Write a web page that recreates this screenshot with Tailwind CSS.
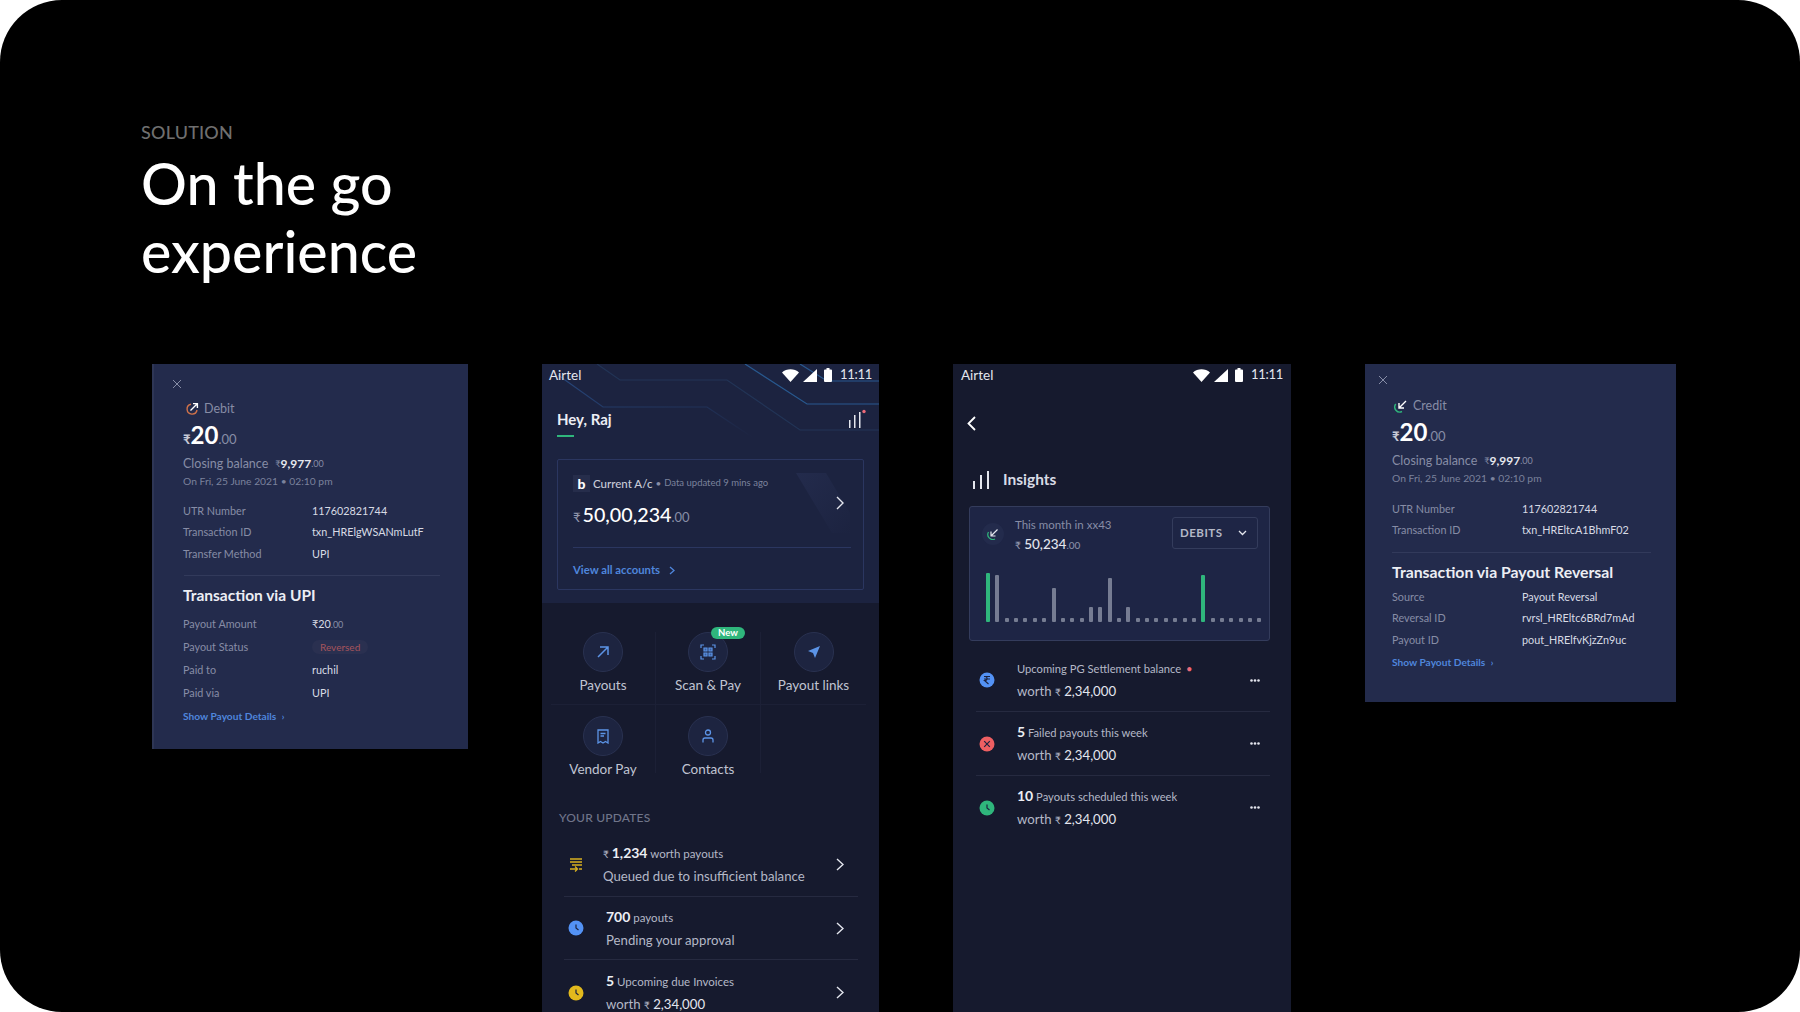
<!DOCTYPE html>
<html lang="en">
<head>
  <meta charset="UTF-8" />
  <title>On the go experience</title>
  <script src="https://cdn.jsdelivr.net/npm/@tailwindcss/browser@4"></script>
</head>
<body class="bg-white font-['Lato','Noto_Sans',sans-serif]">
<div class="w-[1800px] h-[1012px] bg-black rounded-[62px] overflow-hidden">

  <!-- Heading -->
  <div class="h-[364px] pl-[141px] pt-[121px]">
    <p class="text-[18px] leading-[22px] font-medium text-[#6f6f6f] tracking-[0.2px]">SOLUTION</p>
    <h1 class="mt-[6px] text-[57.3px] leading-[68px] font-medium text-white">On the go<br>experience</h1>
  </div>

  <div class="flex items-start gap-[74px] pl-[152px]">

    <!-- Debit card -->
    <div class="w-[316px] h-[385px] bg-[#232b4c] border-l-2 border-[#2e3655] pl-[30px] pt-[15px] text-[10.8px] text-[#878da6]">
      <svg class="w-[10px] h-[10px] ml-[-12px]" viewBox="0 0 10 10" fill="none" stroke="#878da6" stroke-width="1"><path d="M1 1l8 8M9 1l-8 8"/></svg>
      <div class="flex items-center h-[20px] mt-[10px] ml-[1px] gap-[5px] text-[12.5px]">
        <svg class="w-[14px] h-[14px]" viewBox="0 0 14 14" fill="none" stroke-width="1.4"><path d="M6 2.2A5 5 0 1 0 12 8" stroke="#d0724a"/><path d="M5.5 8.5L12 2M8 1.6h4.4V6" stroke="#fff"/></svg>
        <span>Debit</span>
      </div>
      <div class="flex items-baseline h-[28px] mt-[2px] ml-[-1px] text-white">
        <span class="text-[13px] font-bold text-[#c8cbd8]">₹</span><span class="text-[24px] font-bold leading-[28px]">20</span><span class="text-[13px] text-[#878da6]">.00</span>
      </div>
      <div class="flex items-center h-[20px] mt-[5px] ml-[-1px] text-[12.5px]">
        <span>Closing balance</span><span class="ml-[7px] text-[9px]">₹</span><span class="font-bold text-[#e6e8ef] text-[12px]">9,977</span><span class="text-[9px]">.00</span>
      </div>
      <p class="h-[16px] leading-[16px] mt-[-1px] ml-[-1px] text-[10.3px] text-[#7b829c]">On Fri, 25 June 2021 • 02:10 pm</p>
      <div class="mt-[11px] ml-[-1px]">
        <div class="flex items-center h-[21.5px]"><span class="w-[129px]">UTR Number</span><span class="text-[#d8dbe5]">117602821744</span></div>
        <div class="flex items-center h-[21.5px]"><span class="w-[129px]">Transaction ID</span><span class="text-[#d8dbe5]">txn_HRElgWSANmLutF</span></div>
        <div class="flex items-center h-[21.5px]"><span class="w-[129px]">Transfer Method</span><span class="text-[#d8dbe5]">UPI</span></div>
      </div>
      <div class="w-[256px] h-px bg-[#323a5b] mt-[10px]"></div>
      <p class="mt-[8px] ml-[-1px] text-[15.5px] leading-[22px] font-bold text-[#eceef4]">Transaction via UPI</p>
      <div class="mt-[7px] ml-[-1px]">
        <div class="flex items-center h-[23px]"><span class="w-[129px]">Payout Amount</span><span class="text-[#d8dbe5]">₹20<span class="text-[9px] text-[#878da6]">.00</span></span></div>
        <div class="flex items-center h-[23px]"><span class="w-[129px]">Payout Status</span><span class="px-[8px] h-[14px] leading-[14px] rounded-full bg-[#2a3050] text-[10px] text-[#a6545c]">Reversed</span></div>
        <div class="flex items-center h-[23px]"><span class="w-[129px]">Paid to</span><span class="text-[#d8dbe5]">ruchil</span></div>
        <div class="flex items-center h-[23px]"><span class="w-[129px]">Paid via</span><span class="text-[#d8dbe5]">UPI</span></div>
      </div>
      <p class="h-[23px] ml-[-1px] leading-[23px] text-[10.2px] font-bold text-[#4f86dc]">Show Payout Details <span class="ml-[3px] text-[9px]">›</span></p>
    </div>

    <!-- Home screen -->
    <div class="w-[337px] h-[648px] bg-[#161a2e] overflow-hidden">
      <div class="relative h-[239px] bg-[#1c2340] px-[15px]">
        <svg class="absolute inset-0 w-[337px] h-[120px]" viewBox="0 0 337 120" fill="none" stroke-width="1.2">
          <defs>
            <linearGradient id="fadeA" x1="0" y1="0" x2="1" y2="1"><stop offset="0" stop-color="#27487e"/><stop offset="1" stop-color="#1c2340"/></linearGradient>
            <linearGradient id="fadeB" x1="0" y1="0" x2="1" y2="1"><stop offset="0" stop-color="#232b4c"/><stop offset="1" stop-color="#1c2340"/></linearGradient>
          </defs>
          <path d="M55 0L78 16H185L258 66H337" stroke="#223456"/>
          <path d="M16 11L61 43H165L210 73" stroke="url(#fadeA)"/>
          <path d="M203 0L265 40H337" stroke="#28598f"/>
          <path d="M258 0L285 17H337" stroke="#28598f"/>
        </svg>
        <div class="relative flex items-center h-[22px] mx-[-8px] text-[13.5px] text-[#e4e6ee]">
          <span>Airtel</span>
          <div class="flex items-center ml-auto">
            <svg class="w-[17px] h-[13px]" viewBox="0 0 17 13" fill="#fff"><path d="M0 3.5C4.5-.8 12.5-.8 17 3.5L8.5 13z"/></svg>
            <svg class="w-[14px] h-[13px] ml-[4px]" viewBox="0 0 14 13" fill="#fff"><path d="M14 0v13H0z"/></svg>
            <svg class="w-[8px] h-[14px] ml-[7px]" viewBox="0 0 8 14" fill="#fff"><path d="M2.5 0h3v1.5H7a1 1 0 0 1 1 1V13a1 1 0 0 1-1 1H1a1 1 0 0 1-1-1V2.500a1 1 0 0 1 1-1h1.500z"/></svg>
            <span class="ml-[8px] w-[32px] text-[13px] tracking-[-0.3px] text-right">11:11</span>
          </div>
        </div>
        <div class="relative flex items-center h-[24px] mt-[21px]">
          <span class="text-[15px] font-bold text-[#eceef4]">Hey, Raj</span>
          <svg class="ml-auto mr-[-2px] w-[18px] h-[20px]" viewBox="0 0 18 20" fill="#e4e6ee"><path d="M1 11h1.500v8H1zM6 6h1.500v13H6zM11 3h1.500v16H11z"/><circle cx="16" cy="2.500" r="1.700" fill="#ec6a78"/></svg>
        </div>
        <div class="w-[17px] h-[2px] bg-[#2fb67c] mt-[4px]"></div>
        <div class="relative mt-[22px] h-[131px] border border-[#2b3660] rounded-[2px] px-[15px]">
          <svg class="absolute left-[238px] top-[13px]" width="54" height="60" viewBox="0 0 54 60"><path d="M0 0H30L54 40V60H36z" fill="url(#fadeB)"/></svg>
          <div class="relative flex items-center h-[17px] mt-[15px]">
            <span class="w-[17px] h-[17px] bg-[#262d4b] text-center text-[14px] leading-[17px] font-black text-white">b</span>
            <span class="ml-[3px] text-[11.5px] font-medium text-[#c8cbd8]">Current A/c</span>
            <span class="ml-[3px] text-[#878da6] text-[10px]">•</span>
            <span class="ml-[3px] text-[9.5px] text-[#7b829c]">Data updated 9 mins ago</span>
          </div>
          <div class="relative flex items-baseline mt-[9px] h-[28px] text-white">
            <span class="text-[13px] text-[#9298ae] mr-[2px]">₹</span><span class="text-[19.7px] font-medium leading-[28px]">50,00,234</span><span class="text-[13px] text-[#878da6]">.00</span>
            <svg class="absolute right-[4px] top-[-5px] w-[8px] h-[14px]" viewBox="0 0 8 14" fill="none" stroke="#e4e6ee" stroke-width="1.400"><path d="M1 1l6 6-6 6"/></svg>
          </div>
          <div class="h-px bg-[#2b3660] mt-[18px] mr-[-3px]"></div>
          <div class="flex items-center h-[22px] mt-[11px] text-[11.3px] font-bold text-[#4f86dc]">
            View all accounts
            <svg class="ml-[9px] w-[6px] h-[9px]" viewBox="0 0 6 9" fill="none" stroke="#4f86dc" stroke-width="1.300"><path d="M1 1l4 3.500L1 8"/></svg>
          </div>
        </div>
      </div>

      <!-- Quick actions -->
      <div class="relative mt-[29px] grid grid-cols-[105px_105px_105px] ml-[9px] text-[13.500px] text-[#c0c4d2]">
        <div class="flex flex-col items-center h-[73px] border-r border-b border-[#1c2036]">
          <span class="flex items-center justify-center shrink-0 w-[40px] h-[40px] rounded-full bg-[#1d2440] border border-[#293150]">
            <svg class="w-[14px] h-[14px]" viewBox="0 0 14 14" fill="none" stroke="#5c94e6" stroke-width="1.500"><path d="M2 12L12 2M4 2h8v8"/></svg>
          </span>
          <span class="mt-[3px]">Payouts</span>
        </div>
        <div class="relative flex flex-col items-center h-[73px] border-r border-b border-[#1c2036]">
          <span class="absolute left-[55px] top-[-5px] w-[34px] h-[12px] rounded-full bg-[#2fb67c] text-center text-[9.500px] leading-[12px] font-bold text-white">New</span>
          <span class="flex items-center justify-center shrink-0 w-[40px] h-[40px] rounded-full bg-[#1d2440] border border-[#293150]">
            <svg class="w-[16px] h-[16px]" viewBox="0 0 16 16" fill="none" stroke="#5c94e6" stroke-width="1.200"><path d="M1 4V1h3M12 1h3v3M15 12v3h-3M4 15H1v-3"/><path d="M4 4h3v3H4zM9 4h3v3H9zM4 9h3v3H4zM9 9h3v3H9z" fill="#3a5f9f"/></svg>
          </span>
          <span class="mt-[3px]">Scan &amp; Pay</span>
        </div>
        <div class="flex flex-col items-center h-[73px] border-b border-[#1c2036]">
          <span class="flex items-center justify-center shrink-0 w-[40px] h-[40px] rounded-full bg-[#1d2440] border border-[#293150]">
            <svg class="w-[14px] h-[14px]" viewBox="0 0 14 14" fill="#5c94e6"><path d="M13 1L1 6l5 2 2 5z"/></svg>
          </span>
          <span class="mt-[3px]">Payout links</span>
        </div>
        <div class="flex flex-col items-center h-[68px] pt-[11px] border-r border-[#1c2036]">
          <span class="flex items-center justify-center shrink-0 w-[40px] h-[40px] rounded-full bg-[#1d2440] border border-[#293150]">
            <svg class="w-[12px] h-[15px]" viewBox="0 0 12 15" fill="none" stroke="#5c94e6" stroke-width="1.300"><path d="M1 1h10v13l-2.500-1.500L6 14l-2.500-1.500L1 14z"/><path d="M3.500 4.500h5M3.500 7h3.500"/></svg>
          </span>
          <span class="mt-[3px] whitespace-nowrap">Vendor Pay</span>
        </div>
        <div class="flex flex-col items-center h-[68px] pt-[11px] border-r border-[#1c2036]">
          <span class="flex items-center justify-center shrink-0 w-[40px] h-[40px] rounded-full bg-[#1d2440] border border-[#293150]">
            <svg class="w-[12px] h-[14px]" viewBox="0 0 12 14" fill="none" stroke="#5c94e6" stroke-width="1.300"><circle cx="6" cy="3.500" r="2.500"/><path d="M1 13.500V11a2 2 0 0 1 2-2h6a2 2 0 0 1 2 2v2.500"/></svg>
          </span>
          <span class="mt-[3px]">Contacts</span>
        </div>
      </div>

      <!-- Updates -->
      <p class="mt-[37px] ml-[17px] text-[12px] leading-[16px] font-medium tracking-[0.2px] text-[#70758a]">YOUR UPDATES</p>
      <div class="mt-[7px] ml-[22px] mr-[21px] text-[#b4b8c7]">
        <div class="flex items-center h-[64px] border-b border-[#262a40]">
          <svg class="w-[14px] h-[14px] ml-[5px] shrink-0" viewBox="0 0 14 14" fill="none" stroke="#d7b021" stroke-width="1.300"><path d="M1 1h12M1 4h12M3 7h10M1 11h7M6 8.500L8.500 11 6 13.500M10 11h3"/></svg>
          <div class="ml-[20px]">
            <p class="text-[11.500px] leading-[22px]"><span class="text-[10px]">₹</span> <span class="text-[14px] font-bold text-[#eceef4]">1,234</span> worth payouts</p>
            <p class="text-[13.200px] leading-[22px]">Queued due to insufficient balance</p>
          </div>
          <svg class="ml-auto mr-[14px] w-[8px] h-[13px]" viewBox="0 0 8 13" fill="none" stroke="#e4e6ee" stroke-width="1.400"><path d="M1 1l6 5.500L1 12"/></svg>
        </div>
        <div class="flex items-center h-[63px] border-b border-[#262a40]">
          <svg class="w-[16px] h-[16px] ml-[4px] shrink-0" viewBox="0 0 16 16"><circle cx="8" cy="8" r="7.500" fill="#5392f5"/><path d="M8 4.500V8l2.500 2" fill="none" stroke="#1c2340" stroke-width="1.200"/></svg>
          <div class="ml-[22px]">
            <p class="text-[11.500px] leading-[22px]"><span class="text-[14px] font-bold text-[#eceef4]">700</span> payouts</p>
            <p class="text-[13.200px] leading-[22px]">Pending your approval</p>
          </div>
          <svg class="ml-auto mr-[14px] w-[8px] h-[13px]" viewBox="0 0 8 13" fill="none" stroke="#e4e6ee" stroke-width="1.400"><path d="M1 1l6 5.500L1 12"/></svg>
        </div>
        <div class="flex items-start h-[52px] pt-[10px]">
          <svg class="w-[16px] h-[16px] mt-[15px] ml-[4px] shrink-0" viewBox="0 0 16 16"><circle cx="8" cy="8" r="7.500" fill="#e2b91d"/><path d="M8 4.500V8l2.500 2" fill="none" stroke="#1c2340" stroke-width="1.200"/></svg>
          <div class="ml-[22px]">
            <p class="text-[11.500px] leading-[22px]"><span class="text-[14px] font-bold text-[#eceef4]">5</span> Upcoming due Invoices</p>
            <p class="mt-[3px] text-[13.200px] leading-[16px]">worth <span class="text-[10px]">₹</span> <span class="text-[#e4e6ee]">2,34,000</span></p>
          </div>
          <svg class="ml-auto mt-[16px] mr-[14px] w-[8px] h-[13px]" viewBox="0 0 8 13" fill="none" stroke="#e4e6ee" stroke-width="1.400"><path d="M1 1l6 5.500L1 12"/></svg>
        </div>
      </div>
    </div>

    <!-- Insights screen -->
    <div class="w-[338px] h-[648px] bg-[#161a2e] px-[16px]">
      <div class="flex items-center h-[22px] mx-[-8px] text-[13.500px] text-[#e4e6ee]">
        <span>Airtel</span>
        <div class="flex items-center ml-auto">
          <svg class="w-[17px] h-[13px]" viewBox="0 0 17 13" fill="#fff"><path d="M0 3.500C4.500-.8 12.500-.8 17 3.500L8.500 13z"/></svg>
          <svg class="w-[14px] h-[13px] ml-[4px]" viewBox="0 0 14 13" fill="#fff"><path d="M14 0v13H0z"/></svg>
          <svg class="w-[8px] h-[14px] ml-[7px]" viewBox="0 0 8 14" fill="#fff"><path d="M2.500 0h3v1.500H7a1 1 0 0 1 1 1V13a1 1 0 0 1-1 1H1a1 1 0 0 1-1-1V2.500a1 1 0 0 1 1-1h1.500z"/></svg>
          <span class="ml-[8px] w-[32px] text-[13px] tracking-[-0.3px] text-right">11:11</span>
        </div>
      </div>
      <svg class="mt-[30px] ml-[-2px] w-[9px] h-[15px]" viewBox="0 0 9 15" fill="none" stroke="#fff" stroke-width="1.800"><path d="M8 1L1.500 7.500 8 14"/></svg>
      <div class="flex items-center h-[20px] mt-[39px] ml-[4px]">
        <svg class="w-[16px] h-[18px]" viewBox="0 0 16 18" fill="#e4e6ee"><path d="M0 10h2v8H0zM7 4h2v14H7zM14 0h2v18h-2z"/></svg>
        <span class="ml-[14px] text-[15.5px] font-bold text-[#d8dbe5]">Insights</span>
      </div>
      <div class="mt-[16px] w-[301px] h-[135px] bg-[#1e2545] border border-[#343c5c] rounded-[3px] px-[13px] pt-[9px]">
        <div class="flex items-start">
          <span class="flex items-center justify-center w-[22px] h-[22px] mt-[7px] ml-[-1px] rounded-full bg-[#232b4c]">
            <svg class="w-[12px] h-[12px]" viewBox="0 0 12 12" fill="none" stroke-width="1.200"><path d="M8 11A5 5 0 0 1 1.500 4" stroke="#2fb67c"/><path d="M10.500 1.500L4 8M4 3.500V8h4.500" stroke="#e4e6ee"/></svg>
          </span>
          <div class="ml-[11px]">
            <p class="text-[11.500px] leading-[18px] text-[#878da6]">This month in xx43</p>
            <p class="leading-[20px] text-[13.5px] font-medium text-[#e4e6ee]"><span class="text-[10px] text-[#9298ae]">₹</span> 50,234<span class="text-[10px] text-[#878da6]">.00</span></p>
          </div>
          <div class="flex items-center ml-auto mt-[1px] mr-[-2px] w-[86px] h-[32px] border border-[#343c5c] rounded-[3px] pl-[7px] text-[11.500px] font-bold tracking-[0.5px] text-[#b4b8c7]">
            DEBITS
            <svg class="ml-auto mr-[10px] w-[9px] h-[6px]" viewBox="0 0 9 6" fill="none" stroke="#e4e6ee" stroke-width="1.300"><path d="M1 1l3.500 3.500L8 1"/></svg>
          </div>
        </div>
        <div class="flex items-end gap-[5.36px] h-[50px] mt-[17px] ml-[3px] mr-[-10px]">
          <i class="w-[4px] h-[49px] rounded-[1px] bg-[#2fb67c]"></i><i class="w-[4px] h-[47px] rounded-[1px] bg-[#767c92]"></i>
          <i class="w-[4px] h-[4px] rounded-[1px] bg-[#767c92]"></i><i class="w-[4px] h-[4px] rounded-[1px] bg-[#767c92]"></i><i class="w-[4px] h-[4px] rounded-[1px] bg-[#767c92]"></i><i class="w-[4px] h-[4px] rounded-[1px] bg-[#767c92]"></i><i class="w-[4px] h-[4px] rounded-[1px] bg-[#767c92]"></i>
          <i class="w-[4px] h-[34px] rounded-[1px] bg-[#767c92]"></i>
          <i class="w-[4px] h-[4px] rounded-[1px] bg-[#767c92]"></i><i class="w-[4px] h-[4px] rounded-[1px] bg-[#767c92]"></i><i class="w-[4px] h-[4px] rounded-[1px] bg-[#767c92]"></i>
          <i class="w-[4px] h-[15px] rounded-[1px] bg-[#767c92]"></i><i class="w-[4px] h-[15px] rounded-[1px] bg-[#767c92]"></i><i class="w-[4px] h-[44px] rounded-[1px] bg-[#767c92]"></i>
          <i class="w-[4px] h-[4px] rounded-[1px] bg-[#767c92]"></i>
          <i class="w-[4px] h-[15px] rounded-[1px] bg-[#767c92]"></i>
          <i class="w-[4px] h-[4px] rounded-[1px] bg-[#767c92]"></i><i class="w-[4px] h-[4px] rounded-[1px] bg-[#767c92]"></i><i class="w-[4px] h-[4px] rounded-[1px] bg-[#767c92]"></i><i class="w-[4px] h-[4px] rounded-[1px] bg-[#767c92]"></i><i class="w-[4px] h-[4px] rounded-[1px] bg-[#767c92]"></i><i class="w-[4px] h-[4px] rounded-[1px] bg-[#767c92]"></i><i class="w-[4px] h-[4px] rounded-[1px] bg-[#767c92]"></i>
          <i class="w-[4px] h-[47px] rounded-[1px] bg-[#2fb67c]"></i>
          <i class="w-[4px] h-[4px] rounded-[1px] bg-[#767c92]"></i><i class="w-[4px] h-[4px] rounded-[1px] bg-[#767c92]"></i><i class="w-[4px] h-[4px] rounded-[1px] bg-[#767c92]"></i><i class="w-[4px] h-[4px] rounded-[1px] bg-[#767c92]"></i><i class="w-[4px] h-[4px] rounded-[1px] bg-[#767c92]"></i><i class="w-[4px] h-[4px] rounded-[1px] bg-[#767c92]"></i>
        </div>
      </div>
      <div class="mt-[8px] ml-[7px] mr-[5px] text-[#b4b8c7]">
        <div class="flex items-center h-[63px] border-b border-[#262a40]">
          <svg class="w-[16px] h-[16px] ml-[3px] shrink-0" viewBox="0 0 16 16"><circle cx="8" cy="8" r="7.500" fill="#5392f5"/><path d="M5 4.500h6M5 7h6M5.500 4.500c3.500 0 3.500 4-0 4L9.500 12" fill="none" stroke="#1c2340" stroke-width="1.100"/></svg>
          <div class="ml-[22px]">
            <p class="text-[11.200px] leading-[22px]">Upcoming PG Settlement balance <span class="ml-[2px] text-[#ec6a78]">•</span></p>
            <p class="text-[13.200px] leading-[22px]">worth <span class="text-[10px]">₹</span> <span class="text-[#e4e6ee]">2,34,000</span></p>
          </div>
          <svg class="ml-auto mr-[10px] w-[10px] h-[3px]" viewBox="0 0 10 3" fill="#e4e6ee"><circle cx="1.500" cy="1.500" r="1.300"/><circle cx="5" cy="1.500" r="1.300"/><circle cx="8.500" cy="1.500" r="1.300"/></svg>
        </div>
        <div class="flex items-center h-[64px] border-b border-[#262a40]">
          <svg class="w-[16px] h-[16px] ml-[3px] shrink-0" viewBox="0 0 16 16"><circle cx="8" cy="8" r="7.500" fill="#ee5f62"/><path d="M5.200 5.200l5.600 5.600M10.800 5.200l-5.600 5.600" fill="none" stroke="#1c2340" stroke-width="1.200"/></svg>
          <div class="ml-[22px]">
            <p class="text-[11.200px] leading-[22px]"><span class="text-[14px] font-bold text-[#eceef4]">5</span> Failed payouts this week</p>
            <p class="text-[13.200px] leading-[22px]">worth <span class="text-[10px]">₹</span> <span class="text-[#e4e6ee]">2,34,000</span></p>
          </div>
          <svg class="ml-auto mr-[10px] w-[10px] h-[3px]" viewBox="0 0 10 3" fill="#e4e6ee"><circle cx="1.500" cy="1.500" r="1.300"/><circle cx="5" cy="1.500" r="1.300"/><circle cx="8.500" cy="1.500" r="1.300"/></svg>
        </div>
        <div class="flex items-center h-[63px]">
          <svg class="w-[16px] h-[16px] ml-[3px] shrink-0" viewBox="0 0 16 16"><circle cx="8" cy="8" r="7.500" fill="#2fb67c"/><path d="M8 4.500V8l2.500 2" fill="none" stroke="#1c2340" stroke-width="1.200"/></svg>
          <div class="ml-[22px]">
            <p class="text-[11.200px] leading-[22px]"><span class="text-[14px] font-bold text-[#eceef4]">10</span> Payouts scheduled this week</p>
            <p class="text-[13.200px] leading-[22px]">worth <span class="text-[10px]">₹</span> <span class="text-[#e4e6ee]">2,34,000</span></p>
          </div>
          <svg class="ml-auto mr-[10px] w-[10px] h-[3px]" viewBox="0 0 10 3" fill="#e4e6ee"><circle cx="1.500" cy="1.500" r="1.300"/><circle cx="5" cy="1.500" r="1.300"/><circle cx="8.500" cy="1.500" r="1.300"/></svg>
        </div>
      </div>
    </div>

    <!-- Credit card -->
    <div class="w-[311px] h-[338px] bg-[#232b4c] pl-[27px] pt-[11px] text-[10.8px] text-[#878da6]">
      <svg class="w-[10px] h-[10px] ml-[-14px]" viewBox="0 0 10 10" fill="none" stroke="#878da6" stroke-width="1"><path d="M1 1l8 8M9 1l-8 8"/></svg>
      <div class="flex items-center h-[20px] mt-[11px] ml-[2px] gap-[5px] text-[12.5px]">
        <svg class="w-[14px] h-[14px]" viewBox="0 0 14 14" fill="none" stroke-width="1.400"><path d="M8 12.500A5 5 0 0 1 1.800 5" stroke="#2fb67c"/><path d="M12 2L5 9M5 4v5h5" stroke="#fff"/></svg>
        <span>Credit</span>
      </div>
      <div class="flex items-baseline h-[28px] mt-[2px] text-white">
        <span class="text-[13px] font-bold text-[#c8cbd8]">₹</span><span class="text-[24px] font-bold leading-[28px]">20</span><span class="text-[13px] text-[#878da6]">.00</span>
      </div>
      <div class="flex items-center h-[20px] mt-[5px] text-[12.500px]">
        <span>Closing balance</span><span class="ml-[7px] text-[9px]">₹</span><span class="font-bold text-[#e6e8ef] text-[12px]">9,997</span><span class="text-[9px]">.00</span>
      </div>
      <p class="h-[16px] leading-[16px] mt-[-1px] text-[10.3px] text-[#7b829c]">On Fri, 25 June 2021 • 02:10 pm</p>
      <div class="mt-[12px]">
        <div class="flex items-center h-[21.500px]"><span class="w-[130px]">UTR Number</span><span class="text-[#d8dbe5]">117602821744</span></div>
        <div class="flex items-center h-[21.500px]"><span class="w-[130px]">Transaction ID</span><span class="text-[#d8dbe5]">txn_HREltcA1BhmF02</span></div>
      </div>
      <div class="w-[259px] h-px bg-[#323a5b] mt-[11px]"></div>
      <p class="mt-[8px] text-[15.800px] leading-[22px] font-bold text-[#eceef4]">Transaction via Payout Reversal</p>
      <div class="mt-[3px]">
        <div class="flex items-center h-[21.500px]"><span class="w-[130px]">Source</span><span class="text-[#d8dbe5]">Payout Reversal</span></div>
        <div class="flex items-center h-[21.500px]"><span class="w-[130px]">Reversal ID</span><span class="text-[#d8dbe5]">rvrsl_HREltc6BRd7mAd</span></div>
        <div class="flex items-center h-[21.500px]"><span class="w-[130px]">Payout ID</span><span class="text-[#d8dbe5]">pout_HRElfvKjzZn9uc</span></div>
      </div>
      <p class="h-[22px] leading-[22px] text-[10.2px] font-bold text-[#4f86dc]">Show Payout Details <span class="ml-[3px] text-[9px]">›</span></p>
    </div>

  </div>
</div>
</body>
</html>
